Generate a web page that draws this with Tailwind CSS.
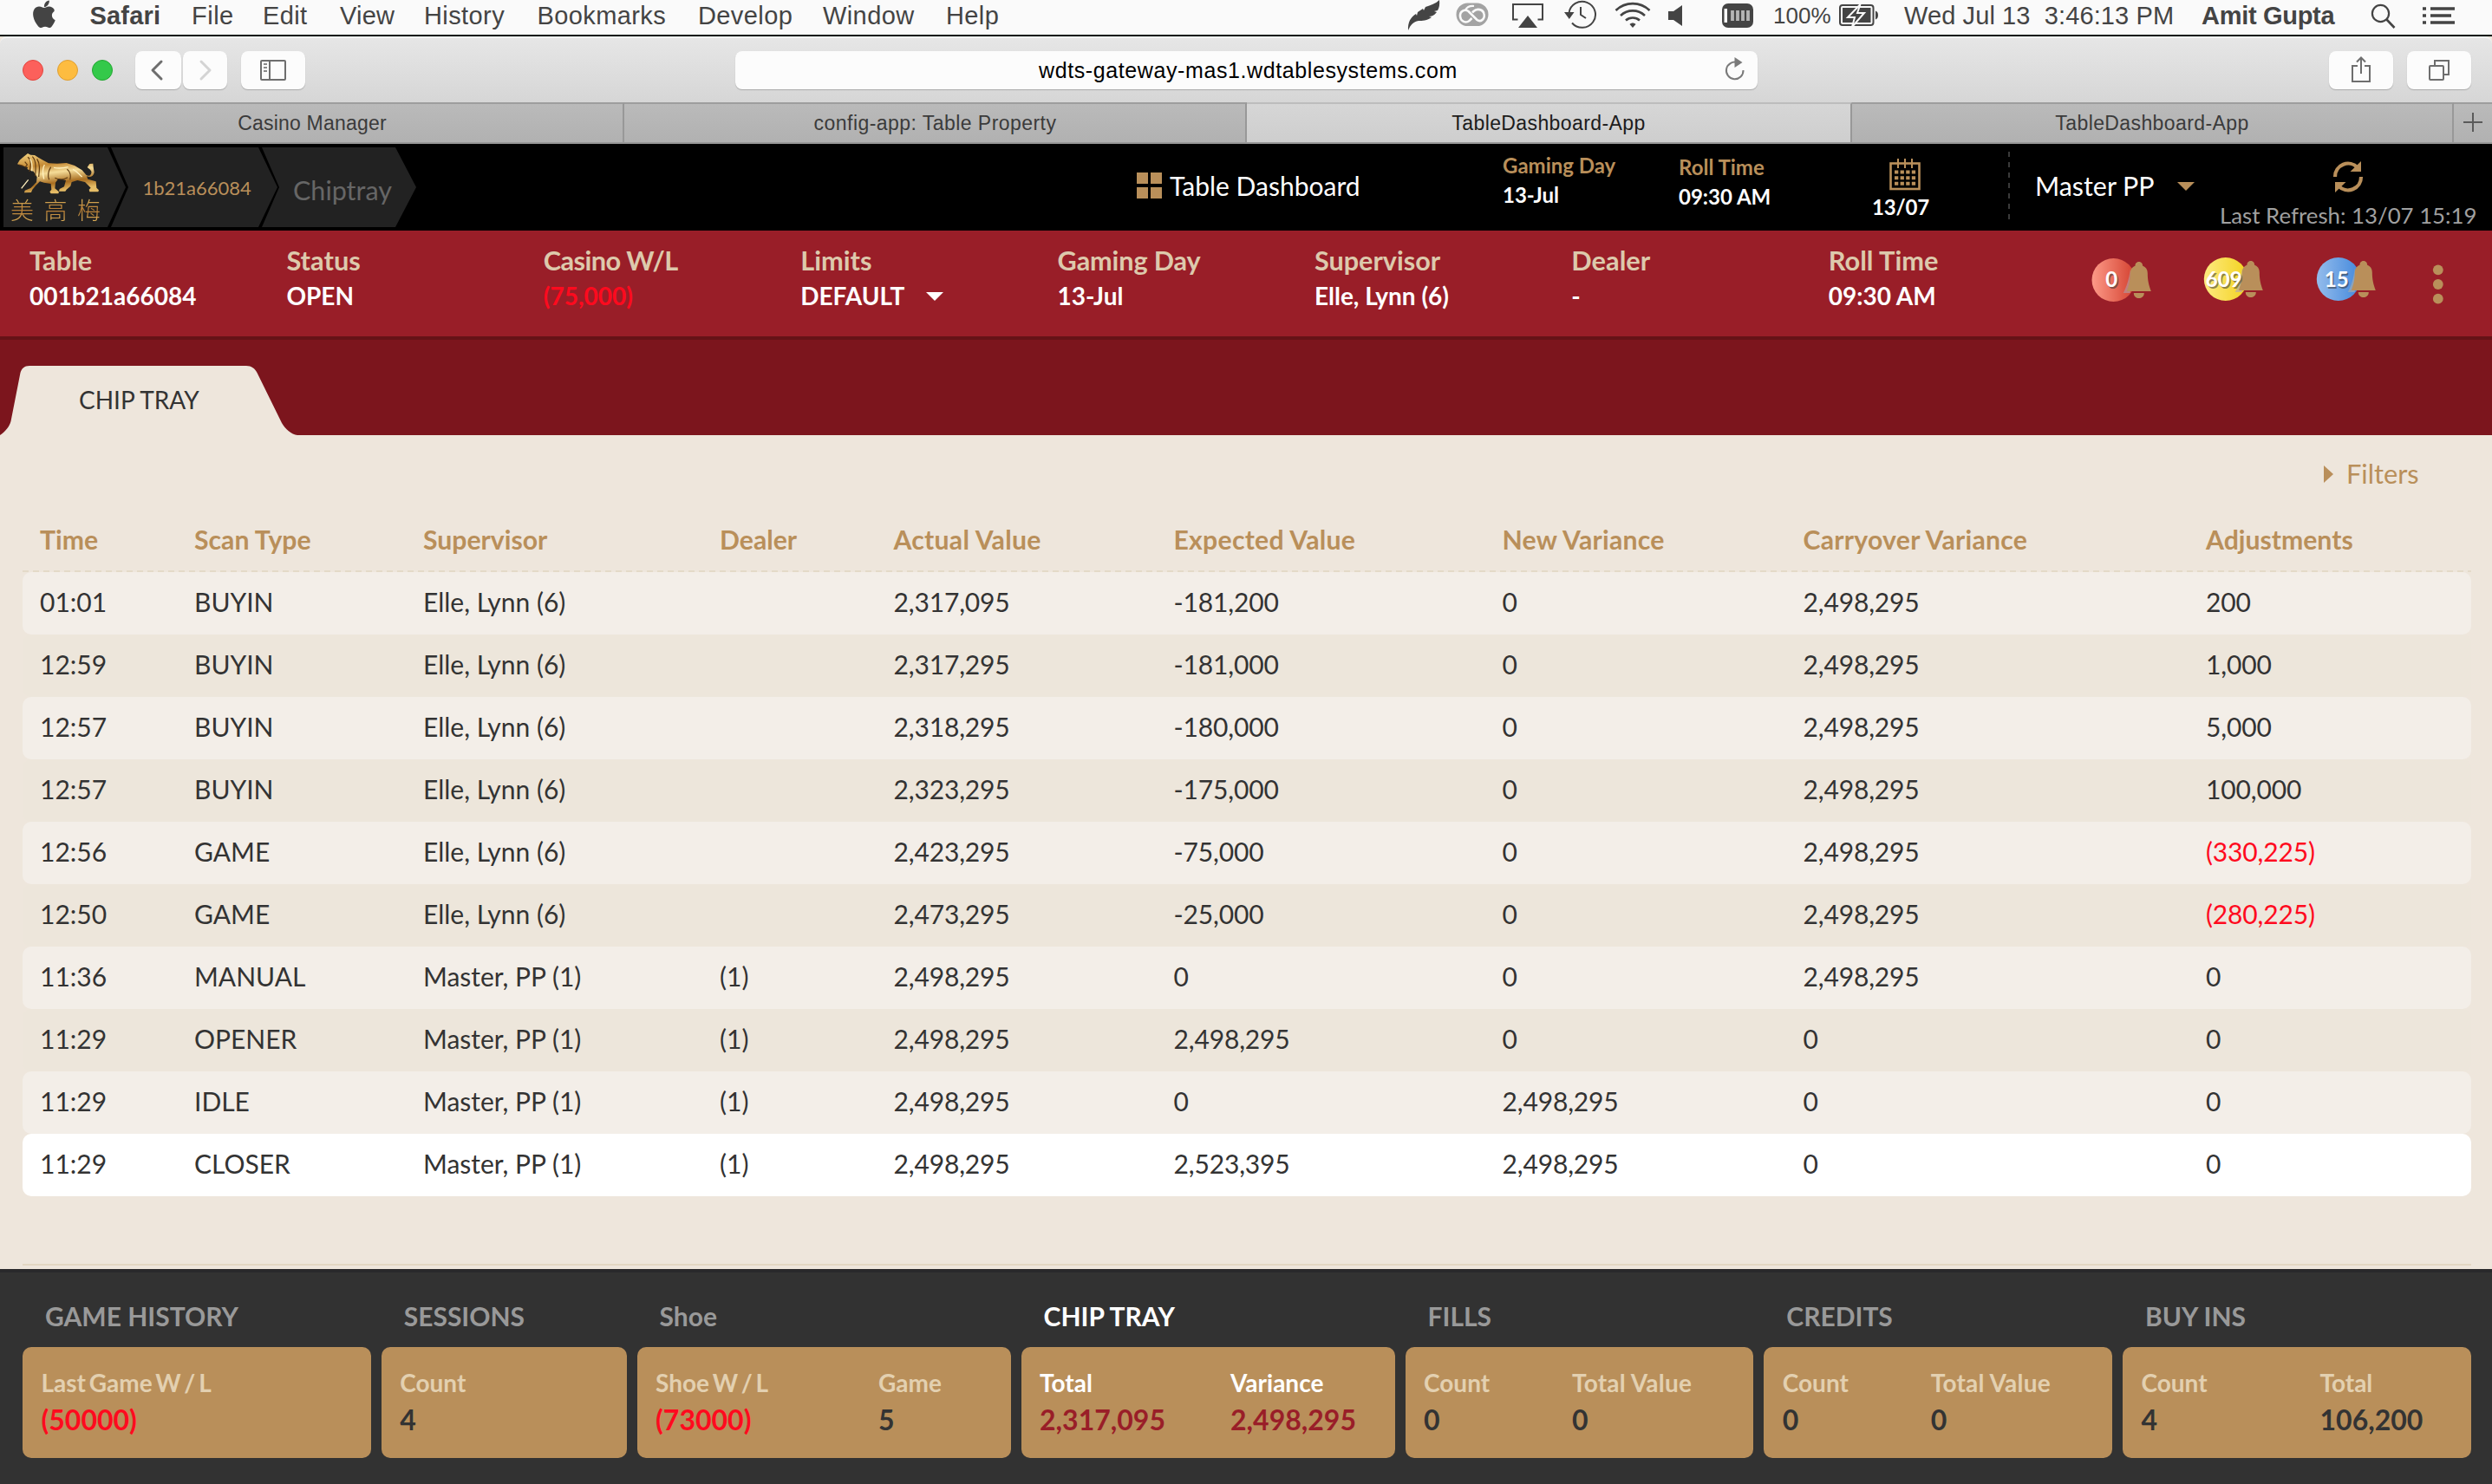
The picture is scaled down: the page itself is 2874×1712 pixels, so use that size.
<!DOCTYPE html>
<html lang="en">
<head>
<meta charset="utf-8">
<title>TableDashboard-App</title>
<script src="https://cdn.jsdelivr.net/npm/@tailwindcss/browser@4"></script>
</head>
<body class="w-[2874px] h-[1712px] overflow-hidden bg-[#eee6dc] font-['Lato',sans-serif] text-[#333333]">

<!-- macOS menu bar -->
<div class="flex h-[42px] border-b-2 border-[#04140c] bg-[#fafafa] font-['Liberation_Sans',sans-serif] text-[29px] leading-[37px] text-[#444444] whitespace-pre">
  <svg class="w-[103.500px] h-9 shrink-0" viewBox="0 0 103.500 36"><path fill="#444" d="M56.8 0c.3 2.300-.6 4-1.700 5.300-1.100 1.300-2.700 2.200-4.200 2.100-.2-1.900.6-3.900 1.700-5.200C53.600 1 55.400.1 56.800 0zM62.600 12.300c-1.700 1.100-2.700 2.700-2.700 4.800 0 2.600 1.500 4.500 3.800 5.500-.9 2.700-2.300 5.200-4 7.200-1.200 1.400-2.400 1.800-4 1.300-2.900-1.200-4.400-1.200-7.200 0-1.800.7-3.200.1-4.500-1.500-5.600-6.500-7.500-15-4.400-19.600 2.700-3.900 6.500-3.400 9.300-2.100 1.500.6 2.500.6 4 0 3.900-1.900 7.800-.6 9.700 2.600z" transform="translate(0 .6)"/></svg>
  <span class="w-[117.500px] shrink-0 font-bold tracking-[0.2px]">Safari</span>
  <span class="w-[82px] shrink-0 tracking-[0.5px]">File</span>
  <span class="w-[89px] shrink-0 tracking-[0.4px]">Edit</span>
  <span class="w-[97px] shrink-0 tracking-[0.2px]">View</span>
  <span class="w-[130.500px] shrink-0 tracking-[0.4px]">History</span>
  <span class="w-[185.500px] shrink-0 tracking-[0.4px]">Bookmarks</span>
  <span class="w-[144px] shrink-0 tracking-[0.4px]">Develop</span>
  <span class="w-[142px] shrink-0 tracking-[0.4px]">Window</span>
  <span class="w-[529px] shrink-0 tracking-[0.4px]">Help</span>
  <svg class="w-[425px] h-10 shrink-0" viewBox="1620 0 425 40" fill="none">
    <path fill="#444" d="M1624 35c-.5-10 3-15 9-19l1 2 1-4 6-4 1 2 2-4c6-2 12-4 16-8 .5 5 0 9-2 12l-4 1 3 1c-3 4-6 5-9 5l3 1c-5 4-11 4-15 4-6 1-9 5-10.500 8z"/>
    <rect x="1680.500" y="4.500" width="35" height="24.500" rx="12.200" fill="#a3a3a3" stroke="#a3a3a3" stroke-width="2"/>
    <path stroke="#fafafa" stroke-width="2.600" d="M1697.500 21l-3 3c-4 3-10 1-10.500-5s5-9 9.500-6l10 10c4 3 9.500-1 8-7-1-5-8-7-12-3l-1.500 1.500"/>
    <path stroke="#fafafa" stroke-width="2.200" d="M1690 11.500c2-3.500 6-5 10-4.500"/>
    <path stroke="#444" stroke-width="2" d="M1750.500 22.500h-5.500v-17.500h34v17.500h-5.500"/><path fill="#444" d="M1762 18l11 14h-22z"/>
    <path stroke="#444" stroke-width="2" d="M1809.500 15a15.300 15 0 1 1 3.500 11.500M1823 8v9l6 4"/><path fill="#444" d="M1804 14h11.500l-5.700 8z"/>
    <g stroke="#444" stroke-width="2.600"><path d="M1863.500 12c11-10.500 28-10.500 39 0"/><path d="M1869 18c8-7.500 20-7.500 28 0"/><path d="M1875 23.500c4.500-4 11.500-4 16 0"/></g><path fill="#444" d="M1879.500 28c2-2 5-2 7 0l-3.500 4z"/>
    <path fill="#444" d="M1924 13h6l10-7v24l-10-7h-6z"/>
    <rect x="1986" y="4" width="36" height="28" rx="7" fill="#444"/><rect x="1988.500" y="10" width="3.500" height="16" fill="#fafafa"/><path stroke="#b5b5b5" stroke-width="3.800" d="M1998 12v12M2004 12v12M2010 12v12M2016 12v12"/>
  </svg>
  <span class="w-[73px] shrink-0 text-[26px] leading-9">100%</span>
  <svg class="w-[78px] h-10 shrink-0" viewBox="2118 0 78 40"><rect x="2122" y="6" width="38.500" height="23" rx="3" fill="none" stroke="#444" stroke-width="2"/><rect x="2125" y="9" width="32.500" height="17" fill="#444"/><path fill="#444" d="M2163 12.500c4 1 4 9 0 10z"/><path fill="#444" stroke="#fafafa" stroke-width="2" d="M2145.500 5l-14.500 15h8l-3 11 14-16h-8z"/></svg>
  <span class="w-[343px] shrink-0 tracking-[0.1px]">Wed Jul 13  3:46:13 PM</span>
  <span class="w-[191px] shrink-0 font-bold tracking-[-0.3px]">Amit Gupta</span>
  <svg class="w-[144px] h-10 shrink-0" viewBox="2730 0 144 40" fill="none" stroke="#444"><circle cx="2745.500" cy="15.500" r="9.600" stroke-width="2.200"/><path stroke-width="2.600" d="M2752.500 22.500l9 9.500"/><path stroke-width="3.600" d="M2803 10h28M2803 18h24M2803 26h28"/><path stroke-width="3.600" d="M2794 10h4M2794 18h4M2794 26h4"/></svg>
</div>

<!-- Browser toolbar -->
<div class="flex items-center h-[76px] border-t-2 border-[#f2f2f2] bg-linear-to-b from-[#e6e6e6] to-[#d6d6d6] rounded-t-lg pl-[26px]">
  <div class="flex gap-4 w-[130px]">
    <i class="size-6 rounded-full bg-[#fc605b] border border-[#e2463f]"></i>
    <i class="size-6 rounded-full bg-[#fdbc40] border border-[#de9f34]"></i>
    <i class="size-6 rounded-full bg-[#34c94a] border border-[#24a732]"></i>
  </div>
  <div class="flex gap-0.5 w-[122px]">
    <div class="w-[53px] h-11 rounded-lg bg-[#fcfcfc] shadow-[0_1px_1px_#aaaaaa]"><svg class="size-full" viewBox="0 0 53 44" fill="none" stroke="#6e6e6e" stroke-width="3" stroke-linecap="round" stroke-linejoin="round"><path d="M30 12L20 22l10 10"/></svg></div>
    <div class="w-[51px] h-11 rounded-lg bg-[#fcfcfc] shadow-[0_1px_1px_#aaaaaa]"><svg class="size-full" viewBox="0 0 51 44" fill="none" stroke="#d4d4d4" stroke-width="3" stroke-linecap="round" stroke-linejoin="round"><path d="M21 12l10 10-10 10"/></svg></div>
  </div>
  <div class="w-[74px] h-11 rounded-lg bg-[#fcfcfc] shadow-[0_1px_1px_#aaaaaa]"><svg class="size-full" viewBox="0 0 74 44" fill="none" stroke="#6e6e6e" stroke-width="2"><rect x="23" y="11" width="28" height="22" rx="1"/><path d="M33 11v22"/><path stroke="#8a8a8a" d="M26 15h4M26 19h4M26 23h4"/></svg></div>
  <div class="ml-[496px] w-[1179px] h-11 rounded-lg bg-[#fcfcfc] shadow-[0_1px_1px_#aaaaaa] flex items-center pl-[350px]">
    <span class="w-[791px] font-['Liberation_Sans',sans-serif] text-[25px] leading-[44px] tracking-[0.6px] text-black">wdts-gateway-mas1.wdtablesystems.com</span>
    <svg class="w-6 h-8 shrink-0" viewBox="0 0 24 32" fill="none" stroke="#7a7a7a" stroke-width="2"><path d="M14.500 7A9.800 9.800 0 1 0 21.500 16"/><path fill="#7a7a7a" stroke="none" d="M11.500 1l9 6-9 6z"/></svg>
  </div>
  <div class="ml-[659px] flex gap-4">
    <div class="w-[74px] h-11 rounded-lg bg-[#fcfcfc] shadow-[0_1px_1px_#aaaaaa]"><svg class="size-full" viewBox="0 0 74 44" fill="none" stroke="#6e6e6e" stroke-width="2"><path d="M33 17h-6v18h20V17h-6M37 26V8M32 12.500l5-5 5 5"/></svg></div>
    <div class="w-[74px] h-11 rounded-lg bg-[#fcfcfc] shadow-[0_1px_1px_#aaaaaa]"><svg class="size-full" viewBox="0 0 74 44" fill="none" stroke="#6e6e6e" stroke-width="2"><rect x="26" y="17" width="16" height="16" rx="1"/><path d="M32 16v-5h16v16h-5"/></svg></div>
  </div>
</div>

<!-- Browser tabs -->
<div class="flex h-12 border-b-2 border-[#989898] font-['Liberation_Sans',sans-serif] text-[23px] tracking-[0.4px] leading-[45px] text-center text-[#3b3b3b]">
  <div class="w-[720px] border-t-2 border-t-[#9e9e9e] border-r-2 border-r-[#989898] bg-linear-to-b from-[#bababa] to-[#b1b1b1] tracking-[0.2px] pl-0.5">Casino Manager</div>
  <div class="w-[718px] border-t-2 border-t-[#9e9e9e] border-r-2 border-r-[#989898] bg-linear-to-b from-[#bababa] to-[#b1b1b1] tracking-[0.45px] pl-px">config-app: Table Property</div>
  <div class="w-[698px] border-t-2 border-t-[#bdbdbd] border-r-2 border-r-[#989898] bg-linear-to-b from-[#d6d6d6] to-[#cecece] text-[#1c1c1c]">TableDashboard-App</div>
  <div class="w-[694px] border-t-2 border-t-[#9e9e9e] border-r-2 border-r-[#989898] bg-linear-to-b from-[#bababa] to-[#b1b1b1]">TableDashboard-App</div>
  <div class="w-[44px] border-t-2 border-t-[#9e9e9e] bg-linear-to-b from-[#bababa] to-[#b1b1b1]"><svg class="w-11 h-11" viewBox="0 0 44 44" stroke="#5a5a5a" stroke-width="2"><path d="M11 21h22M22 10v22"/></svg></div>
</div>

<!-- App header -->
<header class="relative flex h-[100px] bg-black">
  <svg class="absolute left-0 top-0 w-[484px] h-[100px]" viewBox="0 0 484 100" fill="#222222"><path d="M4 4h120l21 46-21 46H4z"/><path d="M128 4h170l22 46-22 46H128l20-46z"/><path d="M302 4h154l24 46-24 46H302l20-46z"/></svg>
  <div class="relative w-[163px] shrink-0">
    <svg class="absolute left-0 top-0 w-[120px] h-[66px]" viewBox="0 -6 360 198">
      <defs><linearGradient id="gold" x1="0" y1="0" x2=".25" y2="1"><stop offset="0" stop-color="#f3d483"/><stop offset=".35" stop-color="#c58a35"/><stop offset=".55" stop-color="#f5dc98"/><stop offset=".8" stop-color="#a86d20"/><stop offset="1" stop-color="#e6bd67"/></linearGradient></defs>
      <path fill="url(#gold)" d="M60 64l8-14 14-12 14-11 10 5 14 1 14 9 16 9 18 10 30 1 32-2 28 9 26 16 14 16c10 8 20 0 18-12l-4-6-10-8 8-12 12-1 1 12 3 18c-2 14-14 20-26 14l4 10 28 8 2 22 8 8-2 6h-30l-2-8 6-6-20-20-26-6-20 6-4 14-14 12-4 6h-22l2-8 16-8 6-22-26-6-10 14-2 20 14 12-2 6h-26l-4-6 6-8-2-20-24-4-14-4-14 14-12 14-4 10-24 1 2-8 20-8 20-20 2-18-12-20-14-4-8-4 2-6z"/>
      <path fill="none" stroke="#5f3a10" stroke-width="3.500" d="M96 40c14 10 10 30 6 50M112 38c14 14 12 40 10 68M128 46c12 18 8 40 6 62M86 56l8 10-8 10M66 66l14 4M176 74c-10 16-12 30-6 44M232 82c12 8 14 24 10 36M190 112c16 8 30 6 44-2"/>
      <path fill="none" stroke="#fff0bd" stroke-width="4" d="M186 76c18 4 34 2 50-2M104 46c8 12 8 26 6 42M252 82c14 6 20 16 32 26M154 66c-8 14-6 34-2 50M98 118l-24 30"/>
    </svg>
    <div class="absolute left-[12px] top-[61px] font-['Noto_Sans_CJK_SC',sans-serif] font-light text-[27px] leading-[30px] tracking-[11.500px] whitespace-nowrap bg-linear-to-b from-[#e6bd62] via-[#b37a33] to-[#e3b55c] bg-clip-text text-transparent">美高梅</div>
  </div>
  <span class="relative w-[174px] shrink-0 pt-[33px] text-[22px] leading-[36px] pl-[1.500px] text-[#b98f5a]">1b21a66084</span>
  <span class="relative w-[973px] shrink-0 pt-[33px] text-[30.500px] leading-[40px] pl-px text-[#666666]">Chiptray</span>
  <svg class="w-[39px] h-[100px] shrink-0" viewBox="1310 166 39 100" fill="#b98f5a"><path d="M1311 199h13v13h-13zM1327 199h13v13h-13zM1311 216h13v13h-13zM1327 216h13v13h-13z"/></svg>
  <span class="w-[384px] shrink-0 pt-7 text-[30px] leading-[40px] text-white">Table Dashboard</span>
  <div class="w-[202px] shrink-0 pt-2 text-[24px] leading-[34px] font-bold"><div class="text-[#b98f5a]">Gaming Day</div><div class="text-white">13-Jul</div></div>
  <div class="w-[223px] shrink-0 pt-2.5 pl-px text-[24px] leading-[34px] font-bold"><div class="text-[#b98f5a]">Roll Time</div><div class="text-white">09:30 AM</div></div>
  <div class="w-[157px] shrink-0">
    <svg class="w-[80px] h-[56px]" viewBox="2158 166 80 56" fill="none" stroke="#b98f5a"><rect x="2180.500" y="188.500" width="33" height="29.500" stroke-width="2.600"/><path stroke-width="2" d="M2189 183v11M2197 183v11M2205 183v11"/><path stroke-width="4" stroke-dasharray="4.300 2.300" d="M2185 198.500h25M2185 205.200h25M2185 211.800h25"/></svg>
    <div class="pl-px text-[24px] leading-[34px] tracking-[-0.2px] font-bold text-white">13/07</div>
  </div>
  <svg class="w-[32px] h-[100px] shrink-0" viewBox="2315 166 32 100"><path stroke="#3a3a3a" stroke-width="2" stroke-dasharray="6 6" d="M2317 175v80"/></svg>
  <span class="w-[163px] shrink-0 pt-7 text-[30.400px] leading-[40px] text-white">Master PP</span>
  <svg class="w-[48px] h-[100px] shrink-0" viewBox="2510 166 48 100"><path fill="#b98f5a" d="M2511 210h20l-10 10z"/></svg>
  <div class="w-[300px] shrink-0 pl-px">
    <svg class="w-[299px] h-[64px]" viewBox="2559 166 299 64"><path fill="none" stroke="#b98f5a" stroke-width="4.200" d="M2693 204a15 15 0 0 1 26-10.500M2723 204a15 15 0 0 1-26 10.500"/><path fill="#b98f5a" d="M2723 186v12h-12.500zM2693 222v-12h12.500z"/></svg>
    <div class="pl-px text-[25.800px] leading-[36px] text-[#a0a0a0] whitespace-nowrap">Last Refresh: 13/07 15:19</div>
  </div>
</header>

<!-- Table status bar -->
<section class="flex h-[126px] border-b-4 border-[#661217] bg-[#991e28] pl-[34px] pt-[15px] text-[28px] leading-[41px] font-bold text-white">
  <div class="w-[296.400px] shrink-0"><div class="text-[30.800px] leading-[40px] text-[#ddc9ac]">Table</div>001b21a66084</div>
  <div class="w-[296.400px] shrink-0"><div class="text-[30.800px] leading-[40px] text-[#ddc9ac]">Status</div>OPEN</div>
  <div class="w-[296.400px] shrink-0"><div class="text-[30.800px] leading-[40px] tracking-[-0.6px] text-[#ddc9ac]">Casino W/L</div><span class="text-[#ff0a1e]">(75,000)</span></div>
  <div class="w-[296.400px] shrink-0"><div class="text-[30.800px] leading-[40px] text-[#ddc9ac]">Limits</div><div class="flex items-center"><span class="w-[145px]">DEFAULT</span><svg class="w-5 h-2.5" viewBox="0 0 20 10"><path fill="#fff" d="M0 0h20L10 10z"/></svg></div></div>
  <div class="w-[296.400px] shrink-0"><div class="text-[30.600px] leading-[40px] tracking-[-0.1px] text-[#ddc9ac]">Gaming Day</div>13-Jul</div>
  <div class="w-[296.400px] shrink-0"><div class="text-[30.600px] leading-[40px] text-[#ddc9ac]">Supervisor</div>Elle, Lynn (6)</div>
  <div class="w-[296.400px] shrink-0"><div class="text-[30.800px] leading-[40px] text-[#ddc9ac]">Dealer</div>-</div>
  <div class="w-[296.400px] shrink-0"><div class="text-[30.800px] leading-[40px] text-[#ddc9ac]">Roll Time</div>09:30 AM</div>
  <svg class="w-[430px] h-[90px] shrink-0" viewBox="2405.200 281 430 90" font-family="Lato" font-weight="bold" font-size="24">
    <defs>
      <linearGradient id="r"><stop offset="0" stop-color="#fd9a88"/><stop offset="1" stop-color="#d3402f"/></linearGradient>
      <linearGradient id="y"><stop offset="0" stop-color="#fdea80"/><stop offset="1" stop-color="#f3d21f"/></linearGradient>
      <linearGradient id="b"><stop offset="0" stop-color="#94bcec"/><stop offset="1" stop-color="#4489dc"/></linearGradient>
      <path id="bell" d="M14 0c3 0 4.500 2.500 4.200 4.500C22 6 24 9 24 13c0 9 1.500 14 4 21H0c2.500-7 4-12 4-21 0-4 2-7 5.800-8.500C9.500 2.500 11 0 14 0zM8 36h12c0 8-12 8-12 0z"/>
      <path id="shade" d="M4 8C3 16 2 24-4 36H4z"/>
    </defs>
    <g><circle cx="2437.700" cy="323" r="25" fill="url(#r)"/><use href="#shade" x="2453" y="302" fill="#c0807f"/><use href="#bell" x="2453" y="302" fill="#b98f5a"/><text x="2430" y="332.500" fill="#333" fill-opacity=".55">0</text><text x="2428.500" y="330.500" fill="#fff">0</text></g>
    <g><circle cx="2567" cy="322" r="25" fill="url(#y)"/><use href="#shade" x="2582" y="301" fill="#cbb884"/><use href="#bell" x="2582" y="301" fill="#b98f5a"/><text x="2545.500" y="332.500" fill="#333" fill-opacity=".55">609</text><text x="2544" y="330.500" fill="#fff">609</text></g>
    <g><circle cx="2697" cy="322" r="25" fill="url(#b)"/><use href="#shade" x="2712" y="301" fill="#8aa3bd"/><use href="#bell" x="2712" y="301" fill="#b98f5a"/><text x="2682.500" y="332.500" fill="#333" fill-opacity=".55">15</text><text x="2681" y="330.500" fill="#fff">15</text></g>
    <g fill="#b98f5a"><circle cx="2812" cy="311.300" r="5.900"/><circle cx="2812" cy="328" r="5.900"/><circle cx="2812" cy="344.700" r="5.900"/></g>
  </svg>
</section>

<!-- Section tabs -->
<nav class="h-[110px] bg-[#7c151d] pt-[30px]">
  <div class="relative w-[344px] h-20">
    <svg class="absolute inset-0 size-full" viewBox="0 0 344 80"><path fill="#eee6dc" d="M0 80C6 76 11 70 12.500 64L23.500 8C25 3 28 0 34 0H284C290 0 294 3 296.500 8L325 66C329 73 336 79 343 80z"/></svg>
    <span class="relative block pl-[91px] text-[28px] leading-[78px]">CHIP TRAY</span>
  </div>
</nav>

<!-- Chip tray history -->
<main class="h-[962px] px-[26px] bg-[#eee6dc] text-[30px]">
  <div class="flex h-[84px] items-center pl-[2653px] pt-1.5 text-[#b98f5a] text-[30.800px]"><svg class="w-[51px] h-5 mr-[-24px]" viewBox="0 0 51 20"><path fill="#b98f5a" d="M1 0l11 10L1 20z"/></svg><span>Filters</span></div>
  <div id="head"></div>
  <div class="h-0.5 mr-[-2px] bg-[repeating-linear-gradient(90deg,#e4dac8_0_7px,transparent_7px_12px)]"></div>
  <div id="rows"></div>
  <div class="mt-[78px] h-0.5 mr-[-2px] bg-[#e3d7c3]"></div>
</main>

<!-- Summary cards -->
<footer id="cards" class="flex gap-3 h-[248px] border-t-4 border-[#29292b] bg-[#323232] pl-[26px] pr-6"></footer>

<script>
const cols = ["Time","Scan Type","Supervisor","Dealer","Actual Value","Expected Value","New Variance","Carryover Variance","Adjustments"];
const data = [
  ["01:01","BUYIN","Elle, Lynn (6)","","2,317,095","-181,200","0","2,498,295","200"],
  ["12:59","BUYIN","Elle, Lynn (6)","","2,317,295","-181,000","0","2,498,295","1,000"],
  ["12:57","BUYIN","Elle, Lynn (6)","","2,318,295","-180,000","0","2,498,295","5,000"],
  ["12:57","BUYIN","Elle, Lynn (6)","","2,323,295","-175,000","0","2,498,295","100,000"],
  ["12:56","GAME","Elle, Lynn (6)","","2,423,295","-75,000","0","2,498,295","(330,225)"],
  ["12:50","GAME","Elle, Lynn (6)","","2,473,295","-25,000","0","2,498,295","(280,225)"],
  ["11:36","MANUAL","Master, PP (1)","(1)","2,498,295","0","0","2,498,295","0"],
  ["11:29","OPENER","Master, PP (1)","(1)","2,498,295","2,498,295","0","0","0"],
  ["11:29","IDLE","Master, PP (1)","(1)","2,498,295","0","2,498,295","0","0"],
  ["11:29","CLOSER","Master, PP (1)","(1)","2,498,295","2,523,395","2,498,295","0","0"]
];
document.getElementById("head").innerHTML = `<div class="grid grid-cols-[178px_264px_342px_200.5px_323px_379px_347px_464.5px_1fr] h-[72px] items-center pl-[20px] pt-0.5 font-bold text-[#b98f5a] text-[30.2px]">${cols.map(c => `<span class="${c.includes(" V") ? "tracking-[0.25px]" : ""}">${c}</span>`).join("")}</div>`;
document.getElementById("rows").innerHTML = data.map((r, i) => {
  const bg = i === 9 ? "bg-white" : i % 2 ? "bg-[#ede6db]" : "bg-[#f3eee8]";
  return `<div class="grid grid-cols-[178px_264px_342px_200.5px_323px_379px_347px_464.5px_1fr] h-[72px] items-center pl-[20px] pb-1 mr-[-2px] rounded-[10px] ${bg}">${r.map((v, j) => `<span class="${j > 3 ? "tracking-[-0.15px]" : ""} ${j === 8 && v[0] === "(" ? "text-[#ff0a1e]" : ""}">${v}</span>`).join("")}</div>`;
}).join("");

const cards = [
  ["GAME HISTORY", "w-[402px]", "", [["Last Game W / L","(50000)"]]],
  ["SESSIONS", "w-[283px]", "", [["Count","4"]]],
  ["Shoe", "w-[431px]", "w-[257px]", [["Shoe W / L","(73000)"],["Game","5"]]],
  ["CHIP TRAY", "w-[431px]", "w-[220px]", [["Total","2,317,095"],["Variance","2,498,295"]]],
  ["FILLS", "w-[402px]", "w-[171px]", [["Count","0"],["Total Value","0"]]],
  ["CREDITS", "w-[402px]", "w-[171px]", [["Count","0"],["Total Value","0"]]],
  ["BUY INS", "w-[402px]", "w-[206px]", [["Count","4"],["Total","106,200"]]]
];
document.getElementById("cards").innerHTML = cards.map(([title, w, cw, items]) => {
  const on = title === "CHIP TRAY";
  return `<div class="${w}">
    <div class="h-[86px] pt-[15px] pl-[26px] text-[30px] leading-[71px] font-bold ${on ? "text-white" : "text-[#999999]"}">${title}</div>
    <div class="flex h-32 rounded-[10px] bg-[#b98f5a] pl-[21.5px] pt-[21px] font-bold whitespace-nowrap">${items.map(([k, v]) => `<div class="${cw} shrink-0"><div class="text-[28px] leading-[40px] ${k.includes("/") ? "[word-spacing:-3px]" : ""} ${k === "Total Value" ? "tracking-[0.2px]" : ""} ${on ? "text-white" : "text-[#e3d0b0]"}">${k}</div><div class="text-[32px] leading-[46px] ${v[0] === "(" ? "text-[#ff0a1e]" : on ? "text-[#991e28]" : "text-[#333333]"}">${v}</div></div>`).join("")}</div>
  </div>`;
}).join("");
</script>
</body>
</html>
